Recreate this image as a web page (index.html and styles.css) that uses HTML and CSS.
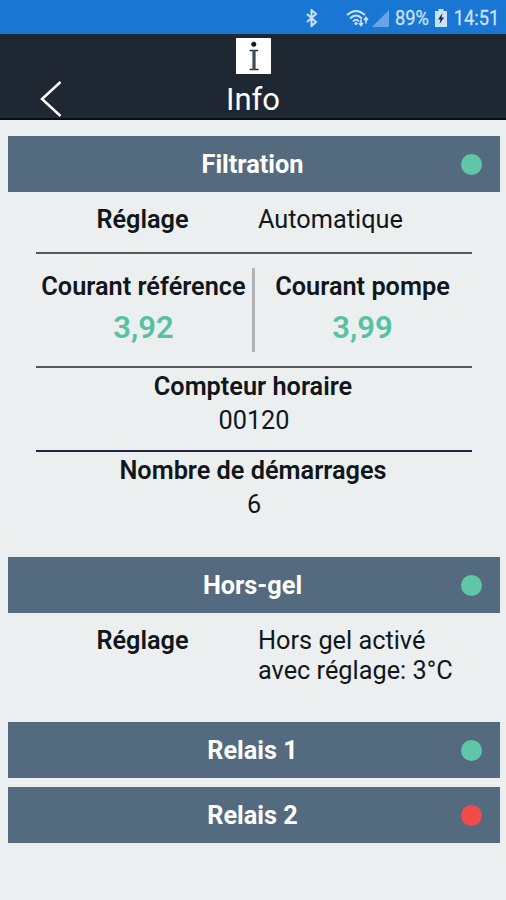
FILE: index.html
```html
<!DOCTYPE html>
<html lang="fr">
<head>
  <meta charset="UTF-8">
  <meta name="viewport" content="width=device-width, initial-scale=1.0">
  <title>Info</title>
  <link rel="stylesheet" href="styles.css">
</head>
<body>
  <div class="status-bar">
    <svg class="bluetooth" width="12" height="18" viewBox="0 0 12 18">
      <path d="M1 5l9 8-4.500 4V1L10 5l-9 8" fill="none" stroke="currentColor" stroke-width="2"/>
    </svg>
    <svg class="wifi" width="24" height="18" viewBox="0 0 24 18">
      <g fill="none" stroke="currentColor" stroke-width="1.800">
        <path d="M1 6Q10-2 19 6"/>
        <path d="M4 9.500Q10 3.500 16 9.500"/>
        <path d="M7 12.500Q10 9 13 12.500"/>
        <path d="M15 10.500v6M13 14l2 2.500 2-2.500M20 14.500V8.500M18 11l2-2.500 2 2.500" stroke-width="1.600"/>
      </g>
      <circle cx="10" cy="14.500" r="1.600" fill="currentColor"/>
    </svg>
    <svg class="signal" width="17" height="17" viewBox="0 0 17 17">
      <path d="M17 0v17H0z" fill="#67a6e6"/>
    </svg>
    <span class="percent">89%</span>
    <svg class="battery" width="12" height="18" viewBox="0 0 12 18">
      <path d="M3.500 0h5v2H12v16H0V2h3.500z" fill="currentColor"/>
      <path d="M7.500 4L3 10.500h2.500L4.500 15 9 8.500H6.500z" fill="#17293f"/>
    </svg>
    <span class="clock">14:51</span>
  </div>

  <header class="header">
    <svg class="back" width="24" height="38" viewBox="0 0 24 38">
      <path d="M21.500 2L3 19l18.500 17" fill="none" stroke="#fff" stroke-width="2.500"/>
    </svg>
    <div class="header-title">
      <svg width="35" height="36" viewBox="0 0 35 36">
        <path d="M0 0h35v36H0z" fill="#fff"/>
        <circle cx="17.800" cy="6.300" r="2.500" fill="#101820"/>
        <path d="M13.500 12.500h8.500M13.500 31.500h9" stroke="#26313d" stroke-width="1.600"/>
        <path d="M18 12v20" stroke="#3f4a57" stroke-width="3.200"/>
      </svg>
      <h1>Info</h1>
    </div>
  </header>

  <main class="content">
    <section class="filtration">
      <h2 class="bar">Filtration<span class="dot green"></span></h2>
      <div class="panel">
        <div class="setting">
          <span class="label">Réglage</span>
          <span class="value">Automatique</span>
        </div>
        <div class="currents">
          <div class="current">
            <div class="label">Courant référence</div>
            <div class="number">3,92</div>
          </div>
          <div class="current">
            <div class="label">Courant pompe</div>
            <div class="number">3,99</div>
          </div>
        </div>
        <div class="counter">
          <div class="label">Compteur horaire</div>
          <div class="value">00120</div>
        </div>
        <div class="counter starts">
          <div class="label">Nombre de démarrages</div>
          <div class="value">6</div>
        </div>
      </div>
    </section>

    <section class="hors-gel">
      <h2 class="bar">Hors-gel<span class="dot green"></span></h2>
      <div class="panel">
        <div class="setting">
          <span class="label">Réglage</span>
          <span class="value">Hors gel activé<br>avec réglage: 3°C</span>
        </div>
      </div>
    </section>

    <section class="relays">
      <h2 class="bar">Relais 1<span class="dot green"></span></h2>
      <h2 class="bar">Relais 2<span class="dot red"></span></h2>
    </section>
  </main>
</body>
</html>
```
FILE: styles.css
```css
* {
  box-sizing: border-box;
}
body {
  font-family: Roboto, sans-serif;
  font-size: 25.3px;
  line-height: 30px;
  margin: 0;
  background: #ebeff0;
  color: #11161b;
}
.status-bar {
  display: flex;
  align-items: center;
  justify-content: flex-end;
  height: 34px;
  padding: 2px 7px 0 0;
  background: #1976d2;
  color: #c9e2fa;
  font-size: 21px;
}
.wifi {
  margin-left: 28px;
}
.signal {
  margin-left: 2px;
}
/* narrow digits */
.percent,
.clock {
  transform: scaleX(0.87);
  transform-origin: right;
  -webkit-text-stroke: 0.3px;
}
.percent {
  margin: 0 6px 0 1px;
}
.header {
  display: grid;
  grid-template-columns: 1fr auto 1fr;
  height: 86px;
  padding-top: 4px;
  background: #1f2733;
  border-bottom: 2px solid #0a0e14;
}
.back {
  margin: 42px 0 0 39px;
}
.header-title {
  display: flex;
  flex-direction: column;
  align-items: center;
}
.header-title svg {
  margin-left: 1px;
}
h1 {
  margin: 8px 0 0;
  font-size: 31px;
  font-weight: 400;
  line-height: 36px;
  color: #fff;
}
.content {
  padding: 16px 6px 0 8px;
}
.bar {
  display: grid;
  grid-template-columns: 1fr auto 1fr;
  align-items: center;
  height: 56px;
  margin: 0;
  padding: 1px 18px 0 15px;
  background: #546a7f;
  color: #fff;
  font-size: 25.3px;
  font-weight: 700;
}
.bar::before {
  content: "";
}
.dot {
  justify-self: end;
  width: 21px;
  height: 21px;
  border-radius: 50%;
}
.green {
  background: #60c6a8;
}
.red {
  background: #ee4d4a;
}
.panel {
  padding: 0 28px;
}
.label {
  font-weight: 600;
}
.setting {
  display: grid;
  grid-template-columns: 213px 1fr;
  column-gap: 9px;
  padding-top: 13px;
}
.setting .label {
  text-align: center;
}
.filtration .setting {
  height: 62px;
  border-bottom: 2px solid #54585d;
}
.currents {
  display: grid;
  grid-template-columns: 219px 1fr;
  height: 114px;
  padding: 14px 0;
  border-bottom: 2px solid #54585d;
  text-align: center;
}
.current {
  padding-top: 4px;
}
.current:first-child {
  padding-right: 1px;
  border-right: 3px solid #b0b4b6;
}
.current:last-child {
  padding-right: 2px;
}
.number {
  margin-top: 8px;
  font-size: 31px;
  font-weight: 600;
  line-height: 36px;
  color: #57c2a2;
}
.counter {
  height: 84px;
  padding-top: 4px;
  border-bottom: 2px solid #25233f;
  text-align: center;
}
.counter .label {
  padding-right: 2px;
}
.counter .value {
  margin-top: 4px;
}
.starts {
  height: 105px;
  border-bottom: none;
}
.hors-gel {
  height: 165px;
}
.relays {
  display: grid;
  gap: 9px;
}
```
